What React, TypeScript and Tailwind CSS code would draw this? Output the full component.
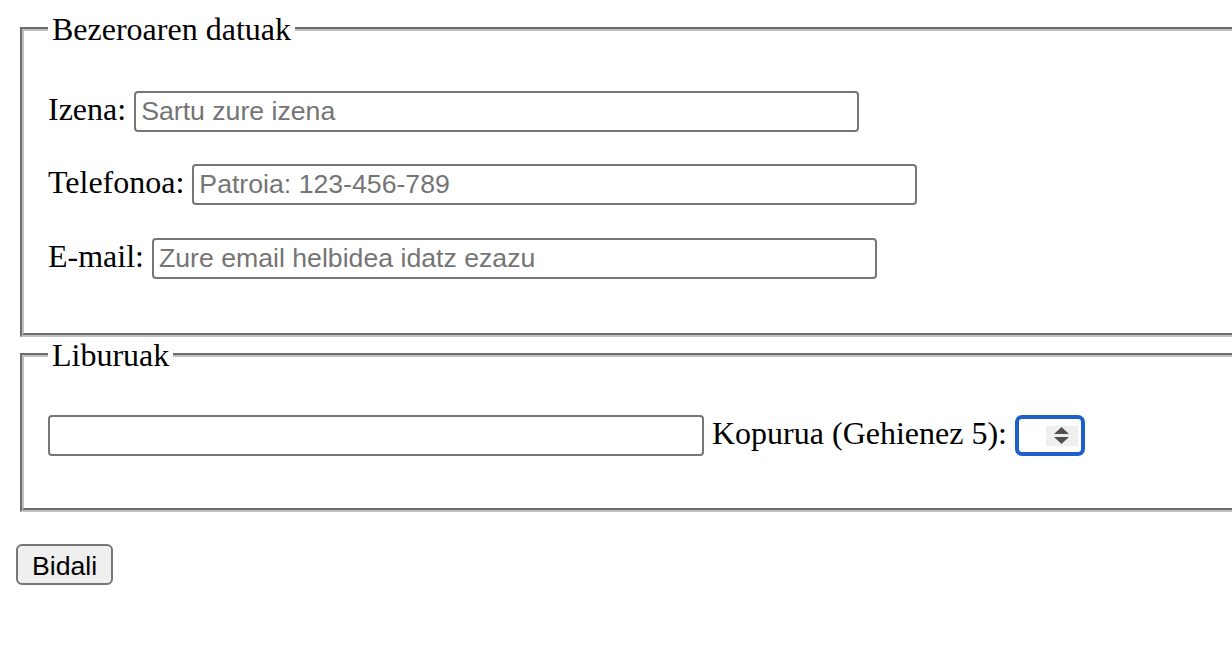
import React from "react";

const inputCls =
  "h-[41px] border-2 border-[#767676] rounded-[4px] bg-white px-[5px] font-['Liberation_Sans',Arial,sans-serif] text-[26.67px] text-black placeholder:text-[#757575] outline-none";

const labelCls = "leading-[36px] text-[32px] text-black whitespace-nowrap";

// One label + text input row inside the customer fieldset
const Row = ({
  label,
  placeholder,
  type = "text",
  className = "",
}: {
  label: string;
  placeholder: string;
  type?: string;
  className?: string;
}) => (
  <div className={`flex items-baseline gap-[8px] h-[41px] ${className}`}>
    <label className={labelCls}>{label}</label>
    <input type={type} placeholder={placeholder} className={`${inputCls} w-[725px]`} />
  </div>
);

export default function App() {
  return (
    <div className="w-full h-[654px] overflow-hidden bg-white font-['Liberation_Serif','Times_New_Roman',serif]">
      <form className="pt-[11px] px-[16px]">
        <fieldset className="mx-[4px] w-[1250px] border-4 [border-style:groove] border-[#c0c0c0] px-[24px] pt-[11px] pb-[20px]">
          <legend className="px-[4px] text-[32px] leading-[36px] text-black">Bezeroaren datuak</legend>
          <Row label="Izena:" placeholder="Sartu zure izena" className="mt-[33px]" />
          <Row label="Telefonoa:" placeholder="Patroia: 123-456-789" type="tel" className="mt-[32px]" />
          <Row label="E-mail:" placeholder="Zure email helbidea idatz ezazu" type="email" className="mt-[33px] mb-[34px]" />
        </fieldset>

        <fieldset className="mx-[4px] w-[1250px] border-4 [border-style:groove] border-[#c0c0c0] px-[24px] pt-[11px] pb-[20px]">
          <legend className="px-[4px] text-[32px] leading-[36px] text-black">Liburuak</legend>
          <div className="flex items-baseline gap-[8px] h-[41px] mt-[31px] mb-[32px]">
            <input type="text" className={`${inputCls} w-[656px]`} />
            <label className={labelCls}>Kopurua (Gehienez 5):</label>
            <div className="self-center flex items-center justify-end shrink-0 w-[70px] h-[41px] border-[4px] border-[#1f5fcb] rounded-[7px] bg-white pr-[3px]">
              <div className="flex items-center justify-center shrink-0 w-[32px] h-[20px] bg-[#efefef]">
                <svg className="shrink-0 w-[15px] h-[17px]" viewBox="0 0 15 17">
                  <polygon points="7.5,0 15,7 0,7" fill="#505050" />
                  <polygon points="0,10 15,10 7.5,17" fill="#505050" />
                </svg>
              </div>
            </div>
          </div>
        </fieldset>

        <button
          type="submit"
          className="mt-[32px] h-[41px] px-[14px] border-2 border-[#767676] rounded-[6px] bg-[#efefef] font-['Liberation_Sans',Arial,sans-serif] text-[26.67px] text-black"
        >
          Bidali
        </button>
      </form>
    </div>
  );
}
